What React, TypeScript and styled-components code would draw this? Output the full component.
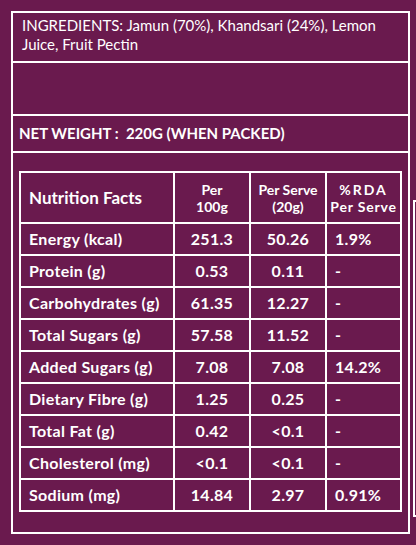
import React from "react";
import styled, { createGlobalStyle } from "styled-components";

const Global = createGlobalStyle`
  html, body { margin: 0; padding: 0; background: #6a1a4e; }
  body { font-family: Lato, "Open Sans", sans-serif; color: #fff; }
  * { box-sizing: border-box; }
`;

const Page = styled.div`
  width: 416px;
  height: 545px;
  overflow: hidden;
  background: #6a1a4e;
  display: flex;
  align-items: flex-start;
  padding: 11px 0 0 11px;
  gap: 2px;
`;

const Frame = styled.div`
  width: 399px;
  height: 523px;
  border: 2px solid #fff;
  display: flex;
  flex-direction: column;
  flex-shrink: 0;
`;

const Section = styled.div<{ $h?: number; $grow?: boolean }>`
  border-top: 2px solid #fff;
  &:first-child { border-top: none; }
  ${(p) => (p.$h ? `height: ${p.$h}px;` : "")}
  ${(p) => (p.$grow ? "flex: 1;" : "")}
`;

const Ingredients = styled.p`
  margin: 0;
  padding: 3px 0 0 9px;
  font-size: 15px;
  line-height: 19px;
  font-weight: 400;
`;

const NetWeight = styled.p`
  margin: 0;
  padding: 7px 0 0 6px;
  font-size: 15px;
  line-height: 20px;
  font-weight: 700;
  white-space: pre;
`;

const TableWrap = styled.div`
  padding: 18px 0 0 6px;
`;

const Grid = styled.div`
  display: grid;
  grid-template-columns: 152px 74px 74px 73px;
  grid-template-rows: 49px repeat(9, 30px);
  gap: 2px;
  border: 2px solid #fff;
  background: #fff;
  width: 383px;
`;

const Cell = styled.div<{ $align?: "left" | "center"; $head?: boolean }>`
  background: #6a1a4e;
  display: flex;
  flex-direction: column;
  justify-content: center;
  align-items: ${(p) => (p.$align === "center" ? "center" : "flex-start")};
  text-align: ${(p) => (p.$align === "center" ? "center" : "left")};
  padding: 0 8px;
  font-weight: 700;
  font-size: ${(p) => (p.$head ? "14px" : "16px")};
  line-height: ${(p) => (p.$head ? "17px" : "18px")};
  letter-spacing: ${(p) => (p.$head ? "0" : "0.3px")};
  white-space: nowrap;
`;

const HeadTitle = styled.span`
  font-size: 17px;
`;

const Spaced = styled.span<{ $ls: number }>`
  letter-spacing: ${(p) => p.$ls}px;
`;

const Neighbor = styled.div`
  flex: 1;
  margin-top: 189px;
  height: 317px;
  border: 2px solid #fff;
  border-right: none;
  margin-left: 1px;
`;

const rows: [string, string, string, string][] = [
  ["Energy (kcal)", "251.3", "50.26", "1.9%"],
  ["Protein (g)", "0.53", "0.11", "-"],
  ["Carbohydrates (g)", "61.35", "12.27", "-"],
  ["Total Sugars (g)", "57.58", "11.52", "-"],
  ["Added Sugars (g)", "7.08", "7.08", "14.2%"],
  ["Dietary Fibre (g)", "1.25", "0.25", "-"],
  ["Total Fat (g)", "0.42", "<0.1", "-"],
  ["Cholesterol (mg)", "<0.1", "<0.1", "-"],
  ["Sodium (mg)", "14.84", "2.97", "0.91%"],
];

export default function App() {
  return (
    <>
      <Global />
      <Page>
        <Frame>
          <Section $h={48}>
            <Ingredients>
              INGREDIENTS: Jamun (70%), Khandsari (24%), Lemon
              <br />
              Juice, Fruit Pectin
            </Ingredients>
          </Section>
          <Section $h={53} />
          <Section $h={37}>
            <NetWeight>{"NET WEIGHT :  220G (WHEN PACKED)"}</NetWeight>
          </Section>
          <Section $grow>
            <TableWrap>
              <Grid>
                <Cell $head>
                  <HeadTitle>Nutrition Facts</HeadTitle>
                </Cell>
                <Cell $head $align="center">
                  <span>Per</span>
                  <span>100g</span>
                </Cell>
                <Cell $head $align="center">
                  <span>Per Serve</span>
                  <span>(20g)</span>
                </Cell>
                <Cell $head $align="center">
                  <Spaced $ls={2}>%RDA</Spaced>
                  <Spaced $ls={0.8}>Per Serve</Spaced>
                </Cell>
                {rows.map((r) => (
                  <React.Fragment key={r[0]}>
                    <Cell>{r[0]}</Cell>
                    <Cell $align="center">{r[1]}</Cell>
                    <Cell $align="center">{r[2]}</Cell>
                    <Cell>{r[3]}</Cell>
                  </React.Fragment>
                ))}
              </Grid>
            </TableWrap>
          </Section>
        </Frame>
        <Neighbor />
      </Page>
    </>
  );
}
